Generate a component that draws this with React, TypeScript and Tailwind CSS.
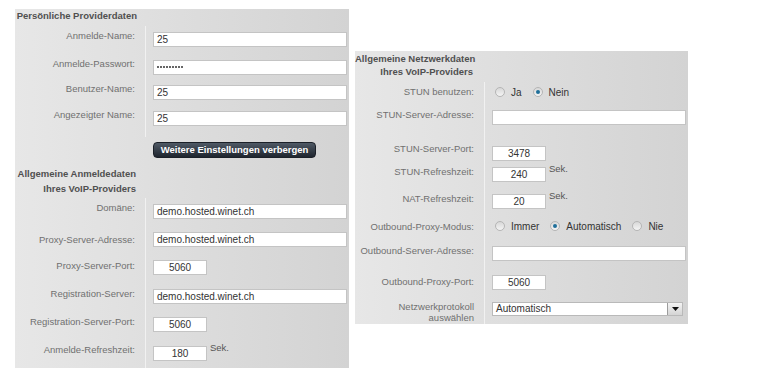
import React from 'react';

const FONT = { fontFamily: '"Liberation Sans", Arial, sans-serif' };

type RowProps = {
  label?: React.ReactNode;
  h: number;
  lp?: number;
  cp?: number;
  lw: number;
  divider?: boolean;
  children?: React.ReactNode;
};

const Row: React.FC<RowProps> = ({ label, h, lp = 3, cp = 6, lw, divider = true, children }) => (
  <div className="flex items-stretch" style={{ height: h }}>
    <div
      className="shrink-0 pr-[10px] text-right text-[9.5px] leading-[13px] text-[#707070] whitespace-nowrap"
      style={{ width: lw, paddingTop: lp }}
    >
      {label}
    </div>
    <div
      className={`flex flex-1 items-start pl-[7px] ${divider ? 'border-l border-[#f1f1f1]' : 'border-l border-transparent'}`}
      style={{ paddingTop: cp }}
    >
      {children}
    </div>
  </div>
);

const TextBox: React.FC<{ value?: string; small?: boolean }> = ({ value = '', small }) => (
  <div
    className={`h-[15px] bg-white border border-[#c4c4c4] text-[10px] leading-[14px] text-[#333] ${
      small ? 'w-[54px] text-center' : 'w-[194px] pl-[3px]'
    }`}
  >
    {value}
  </div>
);

const Sek = () => <span className="ml-[3px] -mt-[5px] text-[9.5px] leading-[13px] text-[#555]">Sek.</span>;

const Radio: React.FC<{ checked?: boolean; label: string }> = ({ checked, label }) => (
  <div className="flex items-center mr-[11px]">
    <span className="flex items-center justify-center w-[10px] h-[10px] rounded-full border border-[#b5b5b5] bg-linear-to-b from-[#d8d8d8] to-[#f4f4f4]">
      {checked && <span className="w-[4px] h-[4px] rounded-full bg-[#1f6f9a]" />}
    </span>
    <span className="ml-[6px] text-[10px] leading-[13px] text-[#333]">{label}</span>
  </div>
);

const Header: React.FC<{ lw: number; h: number; pt: number; pr: number; lh: number; children: React.ReactNode }> = ({
  lw,
  h,
  pt,
  pr,
  lh,
  children,
}) => (
  <div style={{ height: h }}>
    <div
      className="text-right font-bold text-[9.5px] text-[#505050] whitespace-nowrap"
      style={{ width: lw, paddingTop: pt, paddingRight: pr, lineHeight: `${lh}px` }}
    >
      {children}
    </div>
  </div>
);

export default function App() {
  const L = 130;
  const R = 129;
  return (
    <div className="w-[763px] h-[377px] bg-white overflow-hidden flex items-start pl-[15px] pt-[9px]" style={FONT}>
      {/* linkes Panel */}
      <div className="w-[334px] bg-linear-to-r from-[#e7e7e7] to-[#d3d3d3]">
        <Header lw={L} h={17} pt={0} pr={8} lh={13}>
          Persönliche Providerdaten
        </Header>
        <Row lw={L} h={28} lp={2.5} label="Anmelde-Name:">
          <TextBox value="25" />
        </Row>
        <Row lw={L} h={25} lp={2.5} label="Anmelde-Passwort:">
          <div className="flex items-start gap-[1px] h-[15px] w-[194px] bg-white border border-[#c4c4c4] pl-[3px] pt-[5px]">
            {Array.from({ length: 9 }).map((_, i) => (
              <span key={i} className="w-[2px] h-[2px] rounded-full bg-[#333]" />
            ))}
          </div>
        </Row>
        <Row lw={L} h={26} lp={2.5} label="Benutzer-Name:">
          <TextBox value="25" />
        </Row>
        <Row lw={L} h={32} lp={2.5} label="Angezeigter Name:">
          <TextBox value="25" />
        </Row>
        <Row lw={L} h={25} cp={5} divider={false}>
          <button className="w-[163px] h-[16px] rounded-[4px] border border-[#1b2028] bg-linear-to-b from-[#505a66] to-[#1f262f] text-white font-bold text-[9.5px] leading-[14px]">
            Weitere Einstellungen verbergen
          </button>
        </Row>
        <Header lw={L} h={36} pt={4} pr={9} lh={15}>
          Allgemeine Anmeldedaten
          <br />
          Ihres VoIP-Providers
        </Header>
        <Row lw={L} h={28} lp={2.5} label="Domäne:">
          <TextBox value="demo.hosted.winet.ch" />
        </Row>
        <Row lw={L} h={28} lp={6.5} label="Proxy-Server-Adresse:">
          <TextBox value="demo.hosted.winet.ch" />
        </Row>
        <Row lw={L} h={29} lp={4.5} label="Proxy-Server-Port:">
          <TextBox value="5060" small />
        </Row>
        <Row lw={L} h={28} lp={3.5} label="Registration-Server:">
          <TextBox value="demo.hosted.winet.ch" />
        </Row>
        <Row lw={L} h={29} lp={3.5} label="Registration-Server-Port:">
          <TextBox value="5060" small />
        </Row>
        <Row lw={L} h={28} lp={2.5} label="Anmelde-Refreshzeit:">
          <TextBox value="180" small />
          <Sek />
        </Row>
      </div>

      {/* rechtes Panel */}
      <div className="w-[333px] ml-[6px] mt-[42px] bg-linear-to-r from-[#e7e7e7] to-[#d3d3d3]">
        <Header lw={R} h={31} pt={1} pr={11} lh={13}>
          Allgemeine Netzwerkdaten
          <br />
          Ihres VoIP-Providers
        </Header>
        <Row lw={R} h={22} lp={3} cp={3.5} label="STUN benutzen:">
          <div className="flex items-center pl-[3px]">
            <Radio label="Ja" />
            <Radio label="Nein" checked />
          </div>
        </Row>
        <Row lw={R} h={36} lp={3.5} label="STUN-Server-Adresse:">
          <TextBox />
        </Row>
        <Row lw={R} h={21} lp={1.5} label="STUN-Server-Port:">
          <TextBox value="3478" small />
        </Row>
        <Row lw={R} h={27} lp={3.5} label="STUN-Refreshzeit:">
          <TextBox value="240" small />
          <Sek />
        </Row>
        <Row lw={R} h={26} lp={3.5} label="NAT-Refreshzeit:">
          <TextBox value="20" small />
          <Sek />
        </Row>
        <Row lw={R} h={26} lp={5.5} cp={5.5} label="Outbound-Proxy-Modus:">
          <div className="flex items-center pl-[3px]">
            <Radio label="Immer" />
            <Radio label="Automatisch" checked />
            <Radio label="Nie" />
          </div>
        </Row>
        <Row lw={R} h={29} lp={3.5} label="Outbound-Server-Adresse:">
          <TextBox />
        </Row>
        <Row lw={R} h={27} lp={5.5} label="Outbound-Proxy-Port:">
          <TextBox value="5060" small />
        </Row>
        <Row
          lw={R}
          h={28}
          lp={6}
          label={
            <span className="block leading-[10.5px]">
              Netzwerkprotokoll
              <br />
              auswählen
            </span>
          }
        >
          <div className="flex h-[14px] w-[191px] bg-white border border-[#b9b9b9]">
            <span className="flex-1 pl-[3px] text-[10px] leading-[12px] text-[#333]">Automatisch</span>
            <span className="flex items-center justify-center w-[15px] h-full border-l border-[#9c9c9c] bg-linear-to-b from-[#f4f4f4] to-[#d4d4d4]">
              <svg width="7" height="4" viewBox="0 0 7 4">
                <path d="M0 0h7L3.5 4z" fill="#111" />
              </svg>
            </span>
          </div>
        </Row>
      </div>
    </div>
  );
}
